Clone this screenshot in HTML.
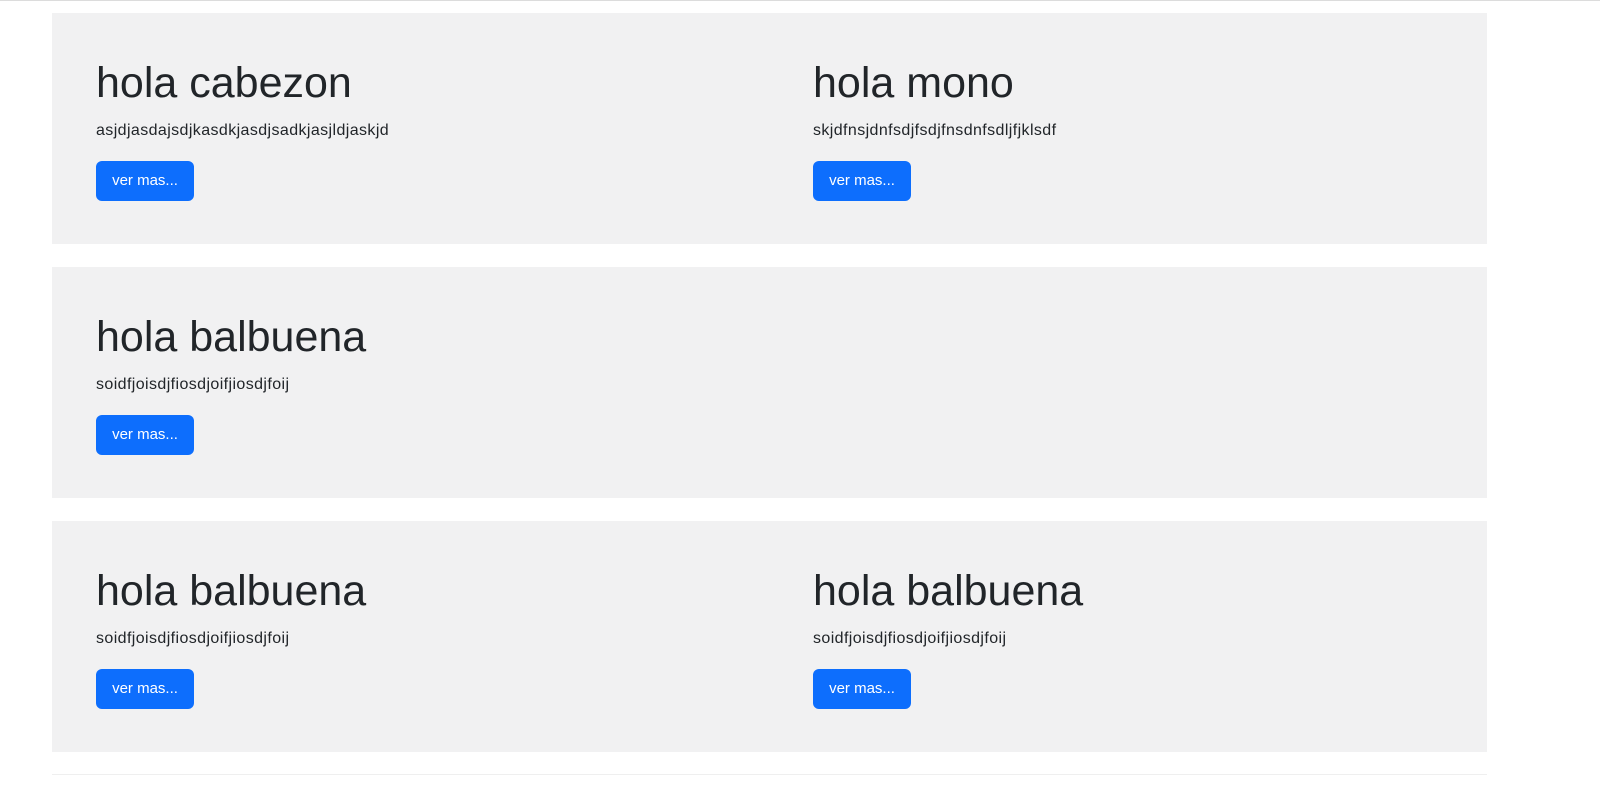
<!DOCTYPE html>
<html><head><style>
body{margin:0;background:#fff;font-family:"Liberation Sans",sans-serif;color:#212529;}
.top{position:absolute;left:0;top:0;width:1600px;height:1px;background:#dcdcdc;}
.p{position:absolute;left:52px;width:1435px;height:231px;background:#f1f1f2;}
.c{position:absolute;top:0;}
h1{position:absolute;margin:0;font-size:43px;font-weight:500;top:46px;white-space:nowrap;letter-spacing:0px;}
p{position:absolute;margin:0;top:109px;font-size:16px;letter-spacing:0.4px;white-space:nowrap;}
.b{position:absolute;top:148px;width:98px;height:40px;background:#0d6efd;color:#fff;border-radius:6px;font-size:15px;line-height:40px;text-align:center;}
.bot{position:absolute;left:52px;top:774px;width:1435px;height:1px;background:#efefef;}
</style></head><body>
<div class="top"></div>
<div class="p" style="top:13px">
 <div class="c" style="left:44px"><h1>hola cabezon</h1><p>asjdjasdajsdjkasdkjasdjsadkjasjldjaskjd</p><div class="b">ver mas...</div></div>
 <div class="c" style="left:761px"><h1>hola mono</h1><p>skjdfnsjdnfsdjfsdjfnsdnfsdljfjklsdf</p><div class="b">ver mas...</div></div>
</div>
<div class="p" style="top:267px">
 <div class="c" style="left:44px"><h1>hola balbuena</h1><p>soidfjoisdjfiosdjoifjiosdjfoij</p><div class="b">ver mas...</div></div>
</div>
<div class="p" style="top:521px">
 <div class="c" style="left:44px"><h1>hola balbuena</h1><p>soidfjoisdjfiosdjoifjiosdjfoij</p><div class="b">ver mas...</div></div>
 <div class="c" style="left:761px"><h1>hola balbuena</h1><p>soidfjoisdjfiosdjoifjiosdjfoij</p><div class="b">ver mas...</div></div>
</div>
<div class="bot"></div>
</body></html>
